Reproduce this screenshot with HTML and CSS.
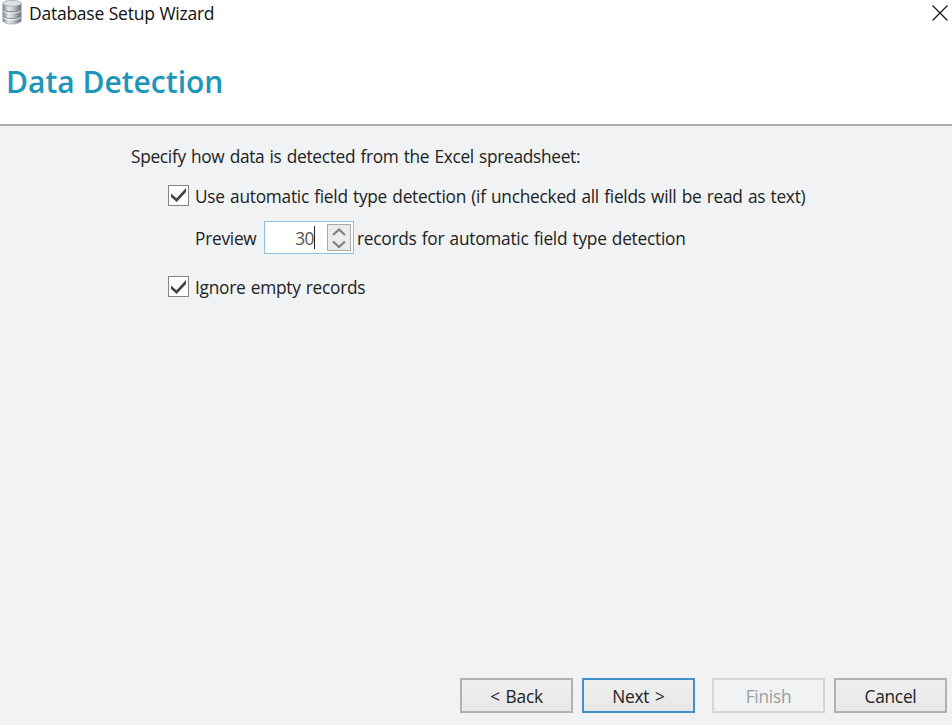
FILE: index.html
```html
<!DOCTYPE html>
<html lang="en">
<head>
<meta charset="utf-8">
<title>Database Setup Wizard</title>
<link rel="stylesheet" href="styles.css">
</head>
<body>
<div class="window">
  <header class="titlebar">
    <svg class="app-icon" width="20" height="25" viewBox="0 0 20 25">
      <defs>
        <linearGradient id="metal" x1="0" x2="1" y1="0" y2="0">
          <stop offset="0" stop-color="#7d8790"/>
          <stop offset=".3" stop-color="#e6e9ec"/>
          <stop offset=".55" stop-color="#c3c9ce"/>
          <stop offset="1" stop-color="#626d78"/>
        </linearGradient>
      </defs>
      <path d="M.8 3.4v17.2C.8 22.5 5 24 10 24s9.200-1.500 9.200-3.400V3.400z" fill="url(#metal)" stroke="#8b949c" stroke-width=".6"/>
      <path d="M1 9.600C3 12.600 17 12.600 19 9.600M1 16.200C3 19.200 17 19.200 19 16.200" fill="none" stroke="#7d8790" stroke-width="1.100"/>
      <path d="M1 10.800C3 13.800 17 13.800 19 10.800M1 17.400C3 20.400 17 20.400 19 17.400" fill="none" stroke="#f3f5f6" stroke-width=".9"/>
      <ellipse cx="10" cy="3.400" rx="9.200" ry="2.900" fill="#dde1e4" stroke="#929ba3" stroke-width=".7"/>
    </svg>
    <span class="title">Database Setup Wizard</span>
    <svg class="close" width="16" height="16" viewBox="0 0 16 16"><path d="M.5.5l15 15M15.500.5l-15 15" stroke="#111" stroke-width="1.200"/></svg>
  </header>
  <div class="banner"><h1>Data Detection</h1></div>
  <main class="content">
    <p class="intro">Specify how data is detected from the Excel spreadsheet:</p>
    <div class="row auto">
      <span class="check"><svg width="18" height="18" viewBox="0 0 18 18"><path d="M1 7.500l5.500 4.800L16 2v4L6.700 16 1 11z" fill="#444"/></svg></span>
      <span class="label auto-label">Use automatic field type detection (if unchecked all fields will be read as text)</span>
    </div>
    <div class="row preview">
      <span class="label preview-label">Preview</span>
      <span class="spin"><span class="value">30</span><span class="caret"></span>
        <span class="arrows"><svg width="22" height="24" viewBox="0 0 22 24"><path d="M5 9l6-5.500L17 9M5 15.500l6 5.500 6-5.500" fill="none" stroke="#808080" stroke-width="2.200"/></svg></span>
      </span>
      <span class="label records-label">records for automatic field type detection</span>
    </div>
    <div class="row ignore">
      <span class="check"><svg width="18" height="18" viewBox="0 0 18 18"><path d="M1 7.500l5.500 4.800L16 2v4L6.700 16 1 11z" fill="#444"/></svg></span>
      <span class="label ignore-label">Ignore empty records</span>
    </div>
  </main>
  <footer class="actions">
    <button class="back">&lt; Back</button>
    <button class="next">Next &gt;</button>
    <button class="finish" disabled>Finish</button>
    <button class="cancel">Cancel</button>
  </footer>
</div>
</body>
</html>
```
FILE: styles.css
```css
* { box-sizing: border-box; }
body {
  margin: 0;
  font-family: "Open Sans", "Noto Sans", sans-serif;
  font-size: 17.3px;
  color: #222;
}
.window {
  width: 952px;
  height: 725px;
  display: flex;
  flex-direction: column;
  background: #f0f2f4;
  overflow: hidden;
}
.titlebar {
  height: 28px;
  display: flex;
  align-items: flex-start;
  background: #fff;
  padding: 0 4px 0 2px;
}
.title {
  margin-left: 7px;
  font-size: 17.5px;
  line-height: 27px;
  letter-spacing: -0.25px;
  word-spacing: 0.5px;
  color: #111;
  white-space: nowrap;
}
.close { margin: 5px 0 0 auto; }
.banner {
  height: 98px;
  background: #fff;
  border-bottom: 2px solid #adafb1;
  padding: 33px 0 0 6px;
}
h1 {
  margin: 0;
  font-size: 30px;
  line-height: 42px;
  font-weight: 600;
  letter-spacing: 0;
  color: #1c96b9;
  white-space: nowrap;
}
.content { flex: 1; padding: 18px 0 0 131px; }
.intro { margin: 0; line-height: 25px; letter-spacing: -0.3px; word-spacing: 1px; white-space: nowrap; }
.row { display: flex; align-items: center; }
.label { white-space: nowrap; letter-spacing: -0.25px; word-spacing: 1px; }
.auto { height: 24px; margin: 15px 0 0 37px; }
.auto .check { margin-top: -2px; }
.check {
  width: 21px;
  height: 21px;
  margin-right: 6px;
  border: 1px solid #858585;
  background: #fff;
  display: flex;
  align-items: center;
  justify-content: center;
}
.preview { height: 33px; margin: 13px 0 0 64px; }
.preview .label { padding-top: 2px; }
.preview-label { width: 69px; }
.spin {
  width: 90px;
  height: 33px;
  margin-right: 3px;
  border: 1px solid #8fc0e0;
  background: #fff;
  display: flex;
  align-items: center;
  justify-content: flex-end;
  padding-right: 2px;
}
.value { color: #555; letter-spacing: -0.5px; padding-top: 1px; }
.caret { width: 1px; height: 23px; background: #222; margin-right: 12px; }
.arrows {
  width: 24px;
  height: 27px;
  border: 1px solid #aaa;
  background: #ebebeb;
  display: flex;
  align-items: center;
  justify-content: center;
}
.ignore { height: 24px; margin: 21px 0 0 37px; }
.ignore .check { margin-top: -1px; }
.actions { display: flex; justify-content: flex-end; padding: 0 5px 12px 0; }
button {
  width: 113px;
  height: 35px;
  margin: 0 0 0 9px;
  padding: 1px 0 0;
  font: inherit;
  letter-spacing: -0.25px;
  word-spacing: 1.5px;
  color: #222;
  border: 2px solid #b1b1b2;
  background: linear-gradient(#f0f0f0, #e7e7e7);
}
.next { border-color: #4390ca; }
.finish { margin-left: 17px; color: #9b9d9f; border-color: #d4d6d8; background: #f0f2f4; }
```
